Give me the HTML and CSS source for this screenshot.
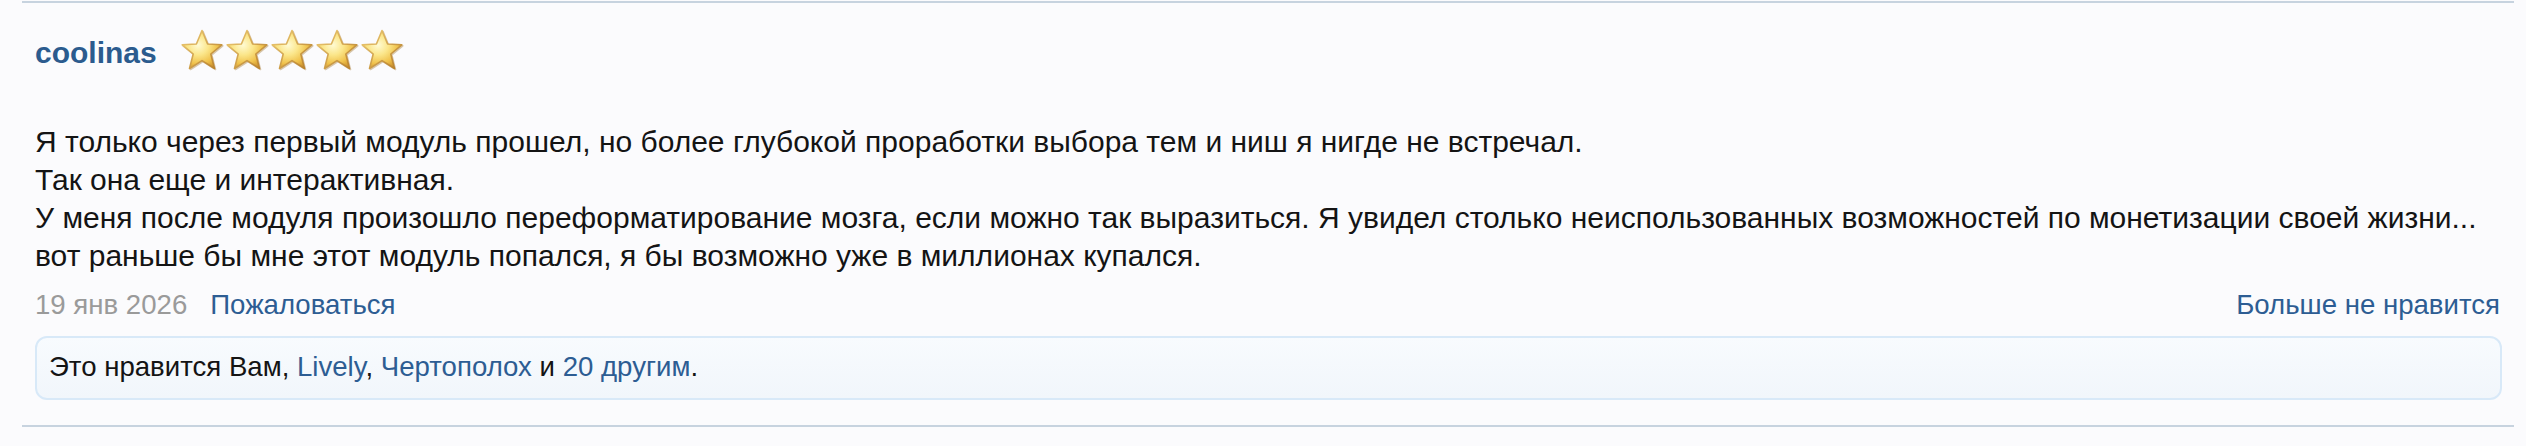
FILE: index.html
```html
<!DOCTYPE html>
<html lang="ru">
<head>
<meta charset="utf-8">
<title>Отзыв</title>
<link rel="stylesheet" href="styles.css">
</head>
<body>
<svg class="defs" width="0" height="0" aria-hidden="true">
  <defs>
    <radialGradient id="starFill" cx="40%" cy="38%" r="66%">
      <stop offset="0" stop-color="#fffbd4"/>
      <stop offset="0.4" stop-color="#fbe68a"/>
      <stop offset="0.75" stop-color="#f0c24c"/>
      <stop offset="1" stop-color="#d0952e"/>
    </radialGradient>
    <linearGradient id="starEdge" x1="0" y1="0" x2="1" y2="1">
      <stop offset="0" stop-color="#f0cf78"/>
      <stop offset="1" stop-color="#b47a26"/>
    </linearGradient>
    <symbol id="star" viewBox="0 0 44 44">
      <path d="M22 2.5 L27.6 16 L41.8 16.8 L30.8 26 L34.5 40.5 L22 32.6 L9.5 40.5 L13.2 26 L2.2 16.8 L16.4 16 Z" fill="url(#starFill)" stroke="url(#starEdge)" stroke-width="1.6" stroke-linejoin="round"/>
    </symbol>
  </defs>
</svg>
<div class="post">
  <div class="post-head">
    <a class="username" href="#">coolinas</a>
    <div class="stars">
      <svg class="star" viewBox="0 0 44 44"><use href="#star"/></svg>
      <svg class="star" viewBox="0 0 44 44"><use href="#star"/></svg>
      <svg class="star" viewBox="0 0 44 44"><use href="#star"/></svg>
      <svg class="star" viewBox="0 0 44 44"><use href="#star"/></svg>
      <svg class="star" viewBox="0 0 44 44"><use href="#star"/></svg>
    </div>
  </div>
  <div class="post-body">Я только через первый модуль прошел, но более глубокой проработки выбора тем и ниш я нигде не встречал.<br>Так она еще и интерактивная.<br>У меня после модуля произошло переформатирование мозга, если можно так выразиться. Я увидел столько неиспользованных возможностей по монетизации своей жизни...<br>вот раньше бы мне этот модуль попался, я бы возможно уже в миллионах купался.</div>
  <div class="post-meta">
    <div class="meta-left">
      <span class="date">19 янв 2026</span>
      <a class="link" href="#">Пожаловаться</a>
    </div>
    <a class="link" href="#">Больше не нравится</a>
  </div>
  <div class="likes">Это нравится Вам, <a class="link" href="#">Lively</a>, <a class="link" href="#">Чертополох</a> и <a class="link" href="#">20 другим</a>.</div>
</div>
</body>
</html>
```
FILE: styles.css
```css
html, body {
  margin: 0;
  padding: 0;
  background: #fbfbfd;
}
body {
  font-family: "Liberation Sans", Arial, Helvetica, sans-serif;
  color: #141414;
}
.defs {
  position: absolute;
  width: 0;
  height: 0;
  overflow: hidden;
}
.post {
  margin: 1px 12px 0 22px;
  border-top: 2px solid #c7d3df;
  border-bottom: 2px solid #c7d3df;
  padding: 25px 12px 25px 13px;
}
.post-head {
  display: flex;
  align-items: flex-start;
  gap: 23px;
  height: 44px;
}
.username {
  font-weight: bold;
  font-size: 30px;
  line-height: 34px;
  margin-top: 8px;
  color: #2b5b8e;
  text-decoration: none;
}
.stars {
  display: flex;
  gap: 1px;
}
.star {
  width: 44px;
  height: 44px;
  display: block;
  filter: drop-shadow(1px 1px 0.6px rgba(150, 100, 20, 0.35));
}
.post-body {
  margin-top: 51px;
  font-size: 30px;
  line-height: 38px;
  white-space: nowrap;
  color: #141414;
}
.post-meta {
  margin-top: 13px;
  display: flex;
  justify-content: space-between;
  font-size: 27.6px;
  line-height: 34px;
  padding-right: 2px;
}
.meta-left {
  display: flex;
  gap: 23px;
}
.date {
  color: #9a9a9a;
}
.link {
  color: #2d5d93;
  text-decoration: none;
}
.likes {
  margin-top: 14px;
  border: 2px solid #d8e9f8;
  border-radius: 12px;
  background: linear-gradient(to bottom, #f8fbfe, #f1f6fb);
  padding: 12px 14px 14px 12px;
  font-size: 27.6px;
  line-height: 34px;
  color: #141414;
}
```
